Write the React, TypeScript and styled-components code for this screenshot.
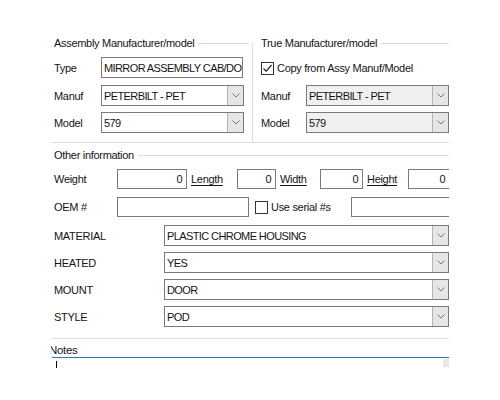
import React from 'react'
import styled, { createGlobalStyle } from 'styled-components'

const GlobalStyle = createGlobalStyle`
  html, body { margin: 0; padding: 0; background: #fff; }
  body {
    font-family: "Liberation Sans", Arial, sans-serif;
    font-size: 11px;
    letter-spacing: -0.3px;
    color: #141414;
  }
`

const Frame = styled.div`
  width: 398px;
  margin-left: 51px;
  padding-top: 36px;
  overflow: hidden;
`

const TopSection = styled.div`
  display: grid;
  grid-template-columns: 201px 1px 1fr;
  height: 106px;
  border-bottom: 1px solid #dcdcdc;
`

const VDivider = styled.div`
  margin-top: 7px;
  background: #dcdcdc;
`

const Group = styled.div<{ $pad: number }>`
  display: flex;
  flex-direction: column;
  padding-left: ${p => p.$pad}px;
  min-width: 0;
`

const GroupTitle = styled.div<{ $right?: number }>`
  display: flex;
  align-items: center;
  gap: 4px;
  height: 14px;
  line-height: 14px;
  white-space: nowrap;
  margin-right: ${p => p.$right ?? 0}px;
  &::after {
    content: '';
    flex: 1;
    height: 1px;
    background: #dcdcdc;
  }
`

const FieldRow = styled.div<{ $cols: string; $top: number; $h?: number }>`
  display: grid;
  grid-template-columns: ${p => p.$cols};
  align-items: center;
  height: ${p => p.$h ?? 21}px;
  margin-top: ${p => p.$top}px;
  white-space: nowrap;
`

const TextBox = styled.div<{ $right?: boolean }>`
  box-sizing: border-box;
  height: 100%;
  border: 1px solid #7a7a7a;
  background: #fff;
  display: flex;
  align-items: center;
  justify-content: ${p => (p.$right ? 'flex-end' : 'flex-start')};
  padding: 0 ${p => (p.$right ? 4 : 2)}px 0 2px;
  letter-spacing: -0.6px;
  overflow: hidden;
  white-space: nowrap;
`

const Combo = styled.div<{ $disabled?: boolean }>`
  box-sizing: border-box;
  height: 100%;
  border: 1px solid #7a7a7a;
  background: ${p => (p.$disabled ? '#f0f0f0' : '#fff')};
  display: flex;
  overflow: hidden;
`

const ComboText = styled.div`
  flex: 1;
  display: flex;
  align-items: center;
  padding-left: 2px;
  letter-spacing: -0.6px;
  white-space: nowrap;
  overflow: hidden;
`

const ComboArrow = styled.div`
  width: 15px;
  background: #e6e6e6;
  border-left: 1px solid #b4b4b4;
  display: flex;
  align-items: center;
  justify-content: center;
`

const LinkLabel = styled.span`
  padding-left: 4px;
  text-decoration: underline;
  text-underline-offset: 2px;
`

const CheckLine = styled.label<{ $indent?: number }>`
  display: flex;
  align-items: center;
  gap: 3px;
  padding-left: ${p => p.$indent ?? 0}px;
  white-space: nowrap;
`

const Box = styled.span`
  box-sizing: border-box;
  width: 13px;
  height: 13px;
  border: 1px solid #333;
  background: #fff;
  display: inline-flex;
  align-items: center;
  justify-content: center;
`

const OtherSection = styled.div`
  padding-left: 3px;
  margin-top: 5px;
`

const Separator = styled.div`
  height: 1px;
  margin: 11px 0 0 1px;
  background: #dcdcdc;
`

const NotesTitle = styled.div`
  margin: 5px 0 0 -2px;
  height: 13px;
  line-height: 13px;
  font-size: 11.5px;
`

const NotesBox = styled.div`
  margin-left: 1px;
  height: 40px;
  border-top: 1px solid #2e7bab;
  display: flex;
  justify-content: space-between;
  align-items: flex-start;
`

const Caret = styled.span`
  width: 1px;
  height: 7px;
  margin: 3px 0 0 4px;
  background: #000;
`

const ScrollCorner = styled.span`
  width: 6px;
  height: 8px;
  margin-top: 1px;
  background: #e8e8e8;
`

const Chevron = () => (
  <svg width="8" height="5" viewBox="0 0 8 5">
    <polyline points="0.5,0.5 4,4 7.5,0.5" fill="none" stroke="#777" strokeWidth="1" />
  </svg>
)

const Check = () => (
  <svg width="11" height="11" viewBox="0 0 11 11">
    <polyline points="1.5,5.5 4.2,8.2 9.5,2" fill="none" stroke="#222" strokeWidth="1.2" />
  </svg>
)

const Select = ({ value, disabled }: { value: string; disabled?: boolean }) => (
  <Combo $disabled={disabled}>
    <ComboText>{value}</ComboText>
    <ComboArrow>
      <Chevron />
    </ComboArrow>
  </Combo>
)

const attributes = [
  { label: 'MATERIAL', value: 'PLASTIC CHROME HOUSING' },
  { label: 'HEATED', value: 'YES' },
  { label: 'MOUNT', value: 'DOOR' },
  { label: 'STYLE', value: 'POD' },
]

const App = () => {
  return (
    <>
      <GlobalStyle />
      <Frame>
        <TopSection>
          <Group $pad={3}>
            <GroupTitle $right={3}>Assembly Manufacturer/model</GroupTitle>
            <FieldRow $cols="47px 142px" $top={7}>
              <span>Type</span>
              <TextBox>MIRROR ASSEMBLY CAB/DO</TextBox>
            </FieldRow>
            <FieldRow $cols="47px 143px" $top={7}>
              <span>Manuf</span>
              <Select value="PETERBILT - PET" />
            </FieldRow>
            <FieldRow $cols="47px 143px" $top={6}>
              <span>Model</span>
              <Select value="579" />
            </FieldRow>
          </Group>
          <VDivider />
          <Group $pad={8}>
            <GroupTitle>True Manufacturer/model</GroupTitle>
            <FieldRow $cols="1fr" $top={11} $h={14}>
              <CheckLine>
                <Box>
                  <Check />
                </Box>
                Copy from Assy Manuf/Model
              </CheckLine>
            </FieldRow>
            <FieldRow $cols="45px 143px" $top={10}>
              <span>Manuf</span>
              <Select value="PETERBILT - PET" disabled />
            </FieldRow>
            <FieldRow $cols="45px 143px" $top={6}>
              <span>Model</span>
              <Select value="579" disabled />
            </FieldRow>
          </Group>
        </TopSection>

        <OtherSection>
          <GroupTitle>Other information</GroupTitle>
          <FieldRow $cols="63px 70px 50px 39px 44px 43px 45px 42px" $top={7} $h={20}>
            <span>Weight</span>
            <TextBox $right>0</TextBox>
            <LinkLabel>Length</LinkLabel>
            <TextBox $right>0</TextBox>
            <LinkLabel>Width</LinkLabel>
            <TextBox $right>0</TextBox>
            <LinkLabel>Height</LinkLabel>
            <TextBox $right>0</TextBox>
          </FieldRow>
          <FieldRow $cols="63px 132px 102px 120px" $top={8} $h={20}>
            <span>OEM #</span>
            <TextBox />
            <CheckLine $indent={6}>
              <Box />
              Use serial #s
            </CheckLine>
            <TextBox />
          </FieldRow>
          {attributes.map((a, i) => (
            <FieldRow key={a.label} $cols="110px 285px" $top={i === 0 ? 8 : 6}>
              <span>{a.label}</span>
              <Select value={a.value} />
            </FieldRow>
          ))}
        </OtherSection>

        <Separator />
        <NotesTitle>Notes</NotesTitle>
        <NotesBox>
          <Caret />
          <ScrollCorner />
        </NotesBox>
      </Frame>
    </>
  )
}

export default App
